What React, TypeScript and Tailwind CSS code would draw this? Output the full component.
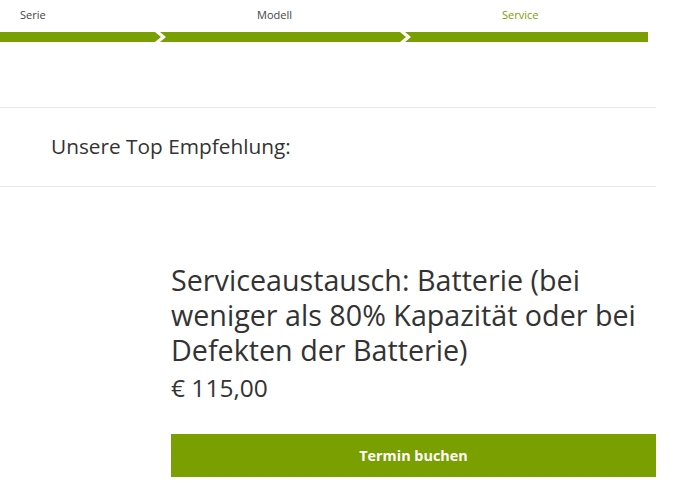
const green = "bg-[#79a000]";

const steps = [
  { label: "Serie", w: "w-[161px]", pad: "pl-[20px]", clip: "[clip-path:polygon(0_0,calc(100%-6px)_0,100%_50%,calc(100%-6px)_100%,0_100%)]" },
  { label: "Modell", w: "w-[246px]", pad: "pl-[97px]", clip: "[clip-path:polygon(0_0,calc(100%-6px)_0,100%_50%,calc(100%-6px)_100%,0_100%,6px_50%)]" },
  { label: "Service", w: "w-[243px]", pad: "pl-[97px]", active: true, clip: "[clip-path:polygon(0_0,100%_0,100%_100%,0_100%,6px_50%)]" },
];

export default function App() {
  return (
    <div className="w-[688px] h-[498px] overflow-hidden bg-white font-['Open_Sans',sans-serif] text-[#333]">
      <div className="flex w-[649px]">
        {steps.map((s, i) => (
          <div key={s.label} className={`${s.w} ${i > 0 ? "-ml-[1px]" : ""} flex flex-col`}>
            <div
              className={`h-[32px] pt-[7px] text-[11px] leading-[16px] ${s.pad} ${
                s.active ? "text-[#79a000]" : "text-[#444]"
              }`}
            >
              {s.label}
            </div>
            <div className={`h-[10px] ${green} ${s.clip}`} />
          </div>
        ))}
      </div>

      <div className="mt-[65px] w-[656px] h-[80px] border-y border-[#e8e8e8] flex items-center pl-[51px]">
        <h2 className="text-[20.8px] text-[#333]">Unsere Top Empfehlung:</h2>
      </div>

      <div className="ml-[171px] w-[485px] mt-[75px]">
        <h1 className="text-[28.7px] leading-[35px] text-[#333]">
          Serviceaustausch: Batterie (bei weniger als 80% Kapazität oder bei Defekten der Batterie)
        </h1>
        <div className="mt-[5px] text-[24.5px] leading-[32px] text-[#333]">€ 115,00</div>
        <button className={`mt-[30px] w-full h-[43px] ${green} text-white text-[14.4px] font-bold`}>
          Termin buchen
        </button>
      </div>
    </div>
  );
}
